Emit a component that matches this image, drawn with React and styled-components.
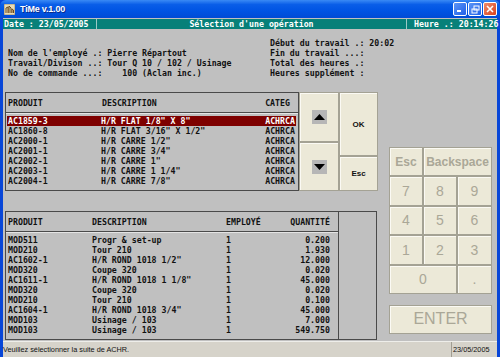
import React from 'react';
import styled, { createGlobalStyle, css } from 'styled-components';

const mono = `"DejaVu Sans Mono", "Liberation Mono", monospace`;
const sans = `"Liberation Sans", Arial, sans-serif`;

const GlobalStyle = createGlobalStyle`
    html, body {
        margin: 0;
        padding: 0;
        background: #c0c0c0;
    }
    body {
        width: 500px;
        height: 357px;
        overflow: hidden;
    }
`

const Window = styled.div`
    width: 500px;
    height: 357px;
    display: flex;
    flex-direction: column;
    background: #0846d8;
`

const TitleBar = styled.div`
    height: 18px;
    display: flex;
    align-items: center;
    padding: 0 3px 0 4px;
    background: linear-gradient(#3a8af5 0%, #0a5ee8 25%, #0054e3 60%, #004bd6 100%);
    border-radius: 6px 6px 0 0;
`

const TitleText = styled.span`
    margin-left: 5px;
    color: #fff;
    font-family: ${sans};
    font-weight: bold;
    font-size: 9px;
    letter-spacing: -0.2px;
    text-shadow: 1px 1px #0a2a8a;
    flex: 1;
`

const Controls = styled.div`
    display: flex;
    gap: 1px;
`

const ControlButton = styled.div`
    width: 14px;
    height: 14px;
    box-sizing: border-box;
    border: 1px solid #fff;
    border-radius: 2px;
    display: flex;
    align-items: center;
    justify-content: center;
    ${props => props.close
        ? css`background: linear-gradient(135deg, #f08a6a, #d9431e);`
        : css`background: linear-gradient(135deg, #5c95f6, #2060e8);`};
`

const Frame = styled.div`
    flex: 1;
    display: flex;
    flex-direction: column;
    margin: 0 3px;
    padding-top: 1px;
    background: #c0c0c0;
`

const HeaderBar = styled.div`
    height: 10px;
    display: flex;
    background: #078079;
    color: #fff;
    font-family: ${mono};
    font-weight: bold;
    font-size: 8.25px;
    line-height: 10px;
    white-space: pre;
`

const HeaderCell = styled.div`
    padding-left: ${props => props.pad || 0}px;
    ${props => props.width && css`width: ${props.width}px;`}
    ${props => props.grow && css`flex: 1; text-align: center;`}
    ${props => props.sepRight && css`border-right: 1px solid #9cc9c6;`}
    ${props => props.sepLeft && css`border-left: 1px solid #9cc9c6;`}
`

const Info = styled.div`
    height: 63px;
    box-sizing: border-box;
    display: flex;
    align-items: flex-end;
    padding: 0 0 14px 5px;
`

const InfoBlock = styled.div`
    width: ${props => props.width || 'auto'};
    font-family: ${mono};
    font-weight: bold;
    font-size: 8.25px;
    line-height: 10px;
    color: #111;
    white-space: pre;
`

const Main = styled.div`
    flex: 1;
    display: grid;
    grid-template-columns: 373px 103px;
    column-gap: 11px;
    padding-left: 2px;
`

const LeftCol = styled.div`
    display: flex;
    flex-direction: column;
`

const TopRow = styled.div`
    height: 99px;
    display: flex;
`

const TableBox = styled.div`
    box-sizing: border-box;
    width: ${props => props.width}px;
    height: ${props => props.height}px;
    border: 1px solid #4a4a4a;
    display: flex;
    font-family: ${mono};
    font-weight: bold;
    font-size: 8.25px;
    color: #111;
    white-space: pre;
`

const TableInner = styled.div`
    flex: 1;
    ${props => props.split && css`
        flex: none;
        width: 332px;
        border-right: 1px solid #4a4a4a;
    `}
`

const TableHead = styled.div`
    height: 19px;
    display: grid;
    grid-template-columns: ${props => props.cols};
    align-items: center;
    padding: 0 8px 0 2px;
    border-bottom: 1px solid #4a4a4a;
    box-shadow: 0 1px 0 #e4e4e4;
`

const TableBody = styled.div`
    padding-top: 3px;
`

const Row = styled.div`
    height: 10px;
    line-height: 10px;
    display: grid;
    grid-template-columns: ${props => props.cols};
    margin: 0 ${props => props.inset ? 2 : 0}px 0 ${props => props.inset ? 1 : 0}px;
    padding: 0 ${props => props.inset ? 1 : 8}px 0 ${props => props.inset ? 1 : 2}px;
    ${props => props.selected && css`
        background: #7e0000;
        color: #fff;
    `}
`

const Right = styled.span`
    text-align: right;
`

const NavPad = styled.div`
    width: 79px;
    display: grid;
    grid-template-columns: 40px 39px;
    grid-template-rows: 50px 14px 35px;
`

const buttonFace = css`
    box-sizing: border-box;
    background: #ece9d8;
    border: 1px solid #a4a294;
    box-shadow: inset 1px 1px 0 #fbfaf4;
    display: flex;
    align-items: center;
    justify-content: center;
`

const NavButton = styled.div`
    ${buttonFace};
    grid-row: ${props => props.row};
    grid-column: ${props => props.col};
    font-family: ${sans};
    font-weight: bold;
    font-size: 8px;
    color: #111;
`

const ArrowBox = styled.span`
    width: 15px;
    height: 14px;
    background: #b6b6b6;
    display: flex;
    align-items: center;
    justify-content: center;
`

const BottomTable = styled.div`
    margin-top: 20px;
`

const Keypad = styled.div`
    padding-top: 55px;
    display: flex;
    flex-direction: column;
`

const KeyGrid = styled.div`
    display: grid;
    grid-template-columns: 34px 34px 35px;
    grid-template-rows: repeat(5, 29.4px);
`

const Key = styled.div`
    ${buttonFace};
    grid-column: span ${props => props.span || 1};
    font-family: ${sans};
    color: #aaa797;
    font-size: ${props => props.size || 14}px;
    font-weight: ${props => props.bold ? 'bold' : 'normal'};
`

const EnterKey = styled(Key)`
    margin-top: 11px;
    height: 29px;
`

const StatusBar = styled.div`
    height: 16px;
    box-sizing: border-box;
    display: flex;
    background: #d6d3ca;
    border-top: 1px solid #eeeeea;
    font-family: ${sans};
    font-size: 7.3px;
    color: #111;
    line-height: 15px;
`

const StatusPanel = styled.div`
    ${props => props.grow
        ? css`flex: 1; padding-left: 0;`
        : css`width: 44px; border-left: 1px solid #a09d92; padding-left: 1px;`};
`

const AppIcon = () => (
    <svg width="11" height="11" viewBox="0 0 11 11">
        <rect x="0" y="0" width="11" height="11" fill="#e9dcb8" stroke="#7a6a40" strokeWidth="0.6" />
        <path d="M2 9 L2 4 L4 3 L4 9 M5 9 L5 2 L7 4 L7 9 M8 9 L8 5 L9.5 6 L9.5 9" stroke="#6b4a1a" strokeWidth="1" fill="none" />
    </svg>
)

const UpArrow = () => (
    <ArrowBox>
        <svg width="11" height="6" viewBox="0 0 11 6"><path d="M0 6 L5.5 0 L11 6 Z" fill="#000" /></svg>
    </ArrowBox>
)

const DownArrow = () => (
    <ArrowBox>
        <svg width="11" height="6" viewBox="0 0 11 6"><path d="M0 0 L5.5 6 L11 0 Z" fill="#000" /></svg>
    </ArrowBox>
)

const products = [
    ['AC1859-3', 'H/R FLAT 1/8" X 8"', 'ACHRCA'],
    ['AC1860-8', 'H/R FLAT 3/16" X 1/2"', 'ACHRCA'],
    ['AC2000-1', 'H/R CARRE 1/2"', 'ACHRCA'],
    ['AC2001-1', 'H/R CARRE 3/4"', 'ACHRCA'],
    ['AC2002-1', 'H/R CARRE 1"', 'ACHRCA'],
    ['AC2003-1', 'H/R CARRE 1 1/4"', 'ACHRCA'],
    ['AC2004-1', 'H/R CARRE 7/8"', 'ACHRCA'],
]

const operations = [
    ['MOD511', 'Progr & set-up', '1', '0.200'],
    ['MOD210', 'Tour 210', '1', '1.930'],
    ['AC1602-1', 'H/R ROND 1018 1/2"', '1', '12.000'],
    ['MOD320', 'Coupe 320', '1', '0.020'],
    ['AC1611-1', 'H/R ROND 1018 1 1/8"', '1', '45.000'],
    ['MOD320', 'Coupe 320', '1', '0.020'],
    ['MOD210', 'Tour 210', '1', '0.100'],
    ['AC1604-1', 'H/R ROND 1018 3/4"', '1', '45.000'],
    ['MOD103', 'Usinage / 103', '1', '7.000'],
    ['MOD103', 'Usinage / 103', '1', '549.750'],
]

const topCols = '94px 1fr auto'
const bottomCols = '84px 134px 1fr auto'

const App = () => {
    return (
        <Window>
            <GlobalStyle />
            <TitleBar>
                <AppIcon />
                <TitleText>TiMe v.1.00</TitleText>
                <Controls>
                    <ControlButton>
                        <svg width="8" height="8" viewBox="0 0 8 8"><rect x="1" y="5" width="4" height="2" fill="#fff" /></svg>
                    </ControlButton>
                    <ControlButton>
                        <svg width="9" height="9" viewBox="0 0 9 9">
                            <rect x="3" y="1" width="5" height="4" fill="none" stroke="#fff" strokeWidth="1" />
                            <rect x="1" y="4" width="5" height="4" fill="none" stroke="#fff" strokeWidth="1" />
                        </svg>
                    </ControlButton>
                    <ControlButton close>
                        <svg width="8" height="8" viewBox="0 0 8 8"><path d="M1 1 L7 7 M7 1 L1 7" stroke="#fff" strokeWidth="1.6" /></svg>
                    </ControlButton>
                </Controls>
            </TitleBar>
            <Frame>
                <HeaderBar>
                    <HeaderCell width={92} pad={1} sepRight>Date : 23/05/2005</HeaderCell>
                    <HeaderCell grow>Sélection d'une opération</HeaderCell>
                    <HeaderCell width={83} pad={7} sepLeft>Heure .: 20:14:26</HeaderCell>
                </HeaderBar>
                <Info>
                    <InfoBlock width="262px">
                        {"Nom de l'employé .: Pierre Répartout\nTravail/Divison ..: Tour Q 10 / 102 / Usinage\nNo de commande ...:    100 (Aclan inc.)"}
                    </InfoBlock>
                    <InfoBlock>
                        {"Début du travail .: 20:02\nFin du travail ...:\nTotal des heures .:\nHeures supplément :"}
                    </InfoBlock>
                </Info>
                <Main>
                    <LeftCol>
                        <TopRow>
                            <TableBox width={294} height={99}>
                                <TableInner>
                                    <TableHead cols={topCols}>
                                        <span>PRODUIT</span>
                                        <span>DESCRIPTION</span>
                                        <Right>CATEG</Right>
                                    </TableHead>
                                    <TableBody>
                                        {products.map((p, i) => (
                                            <Row key={i} cols="93px 1fr auto" inset selected={i === 0}>
                                                <span>{p[0]}</span>
                                                <span>{p[1]}</span>
                                                <Right>{p[2]}</Right>
                                            </Row>
                                        ))}
                                    </TableBody>
                                </TableInner>
                            </TableBox>
                            <NavPad>
                                <NavButton row="1" col="1"><UpArrow /></NavButton>
                                <NavButton row="2 / 4" col="1"><DownArrow /></NavButton>
                                <NavButton row="1 / 3" col="2">OK</NavButton>
                                <NavButton row="3" col="2">Esc</NavButton>
                            </NavPad>
                        </TopRow>
                        <BottomTable>
                            <TableBox width={372} height={129}>
                                <TableInner split>
                                    <TableHead cols={bottomCols}>
                                        <span>PRODUIT</span>
                                        <span>DESCRIPTION</span>
                                        <span>EMPLOYÉ</span>
                                        <Right>QUANTITÉ</Right>
                                    </TableHead>
                                    <TableBody>
                                        {operations.map((o, i) => (
                                            <Row key={i} cols={bottomCols}>
                                                <span>{o[0]}</span>
                                                <span>{o[1]}</span>
                                                <span>{o[2]}</span>
                                                <Right>{o[3]}</Right>
                                            </Row>
                                        ))}
                                    </TableBody>
                                </TableInner>
                            </TableBox>
                        </BottomTable>
                    </LeftCol>
                    <Keypad>
                        <KeyGrid>
                            <Key bold size={12}>Esc</Key>
                            <Key bold size={12} span={2}>Backspace</Key>
                            {['7', '8', '9', '4', '5', '6', '1', '2', '3'].map(k => (
                                <Key key={k}>{k}</Key>
                            ))}
                            <Key span={2}>0</Key>
                            <Key>.</Key>
                        </KeyGrid>
                        <EnterKey size={16}>ENTER</EnterKey>
                    </Keypad>
                </Main>
                <StatusBar>
                    <StatusPanel grow>Veuillez sélectionner la suite de ACHR.</StatusPanel>
                    <StatusPanel>23/05/2005</StatusPanel>
                </StatusBar>
            </Frame>
        </Window>
    )
}

export default App;
